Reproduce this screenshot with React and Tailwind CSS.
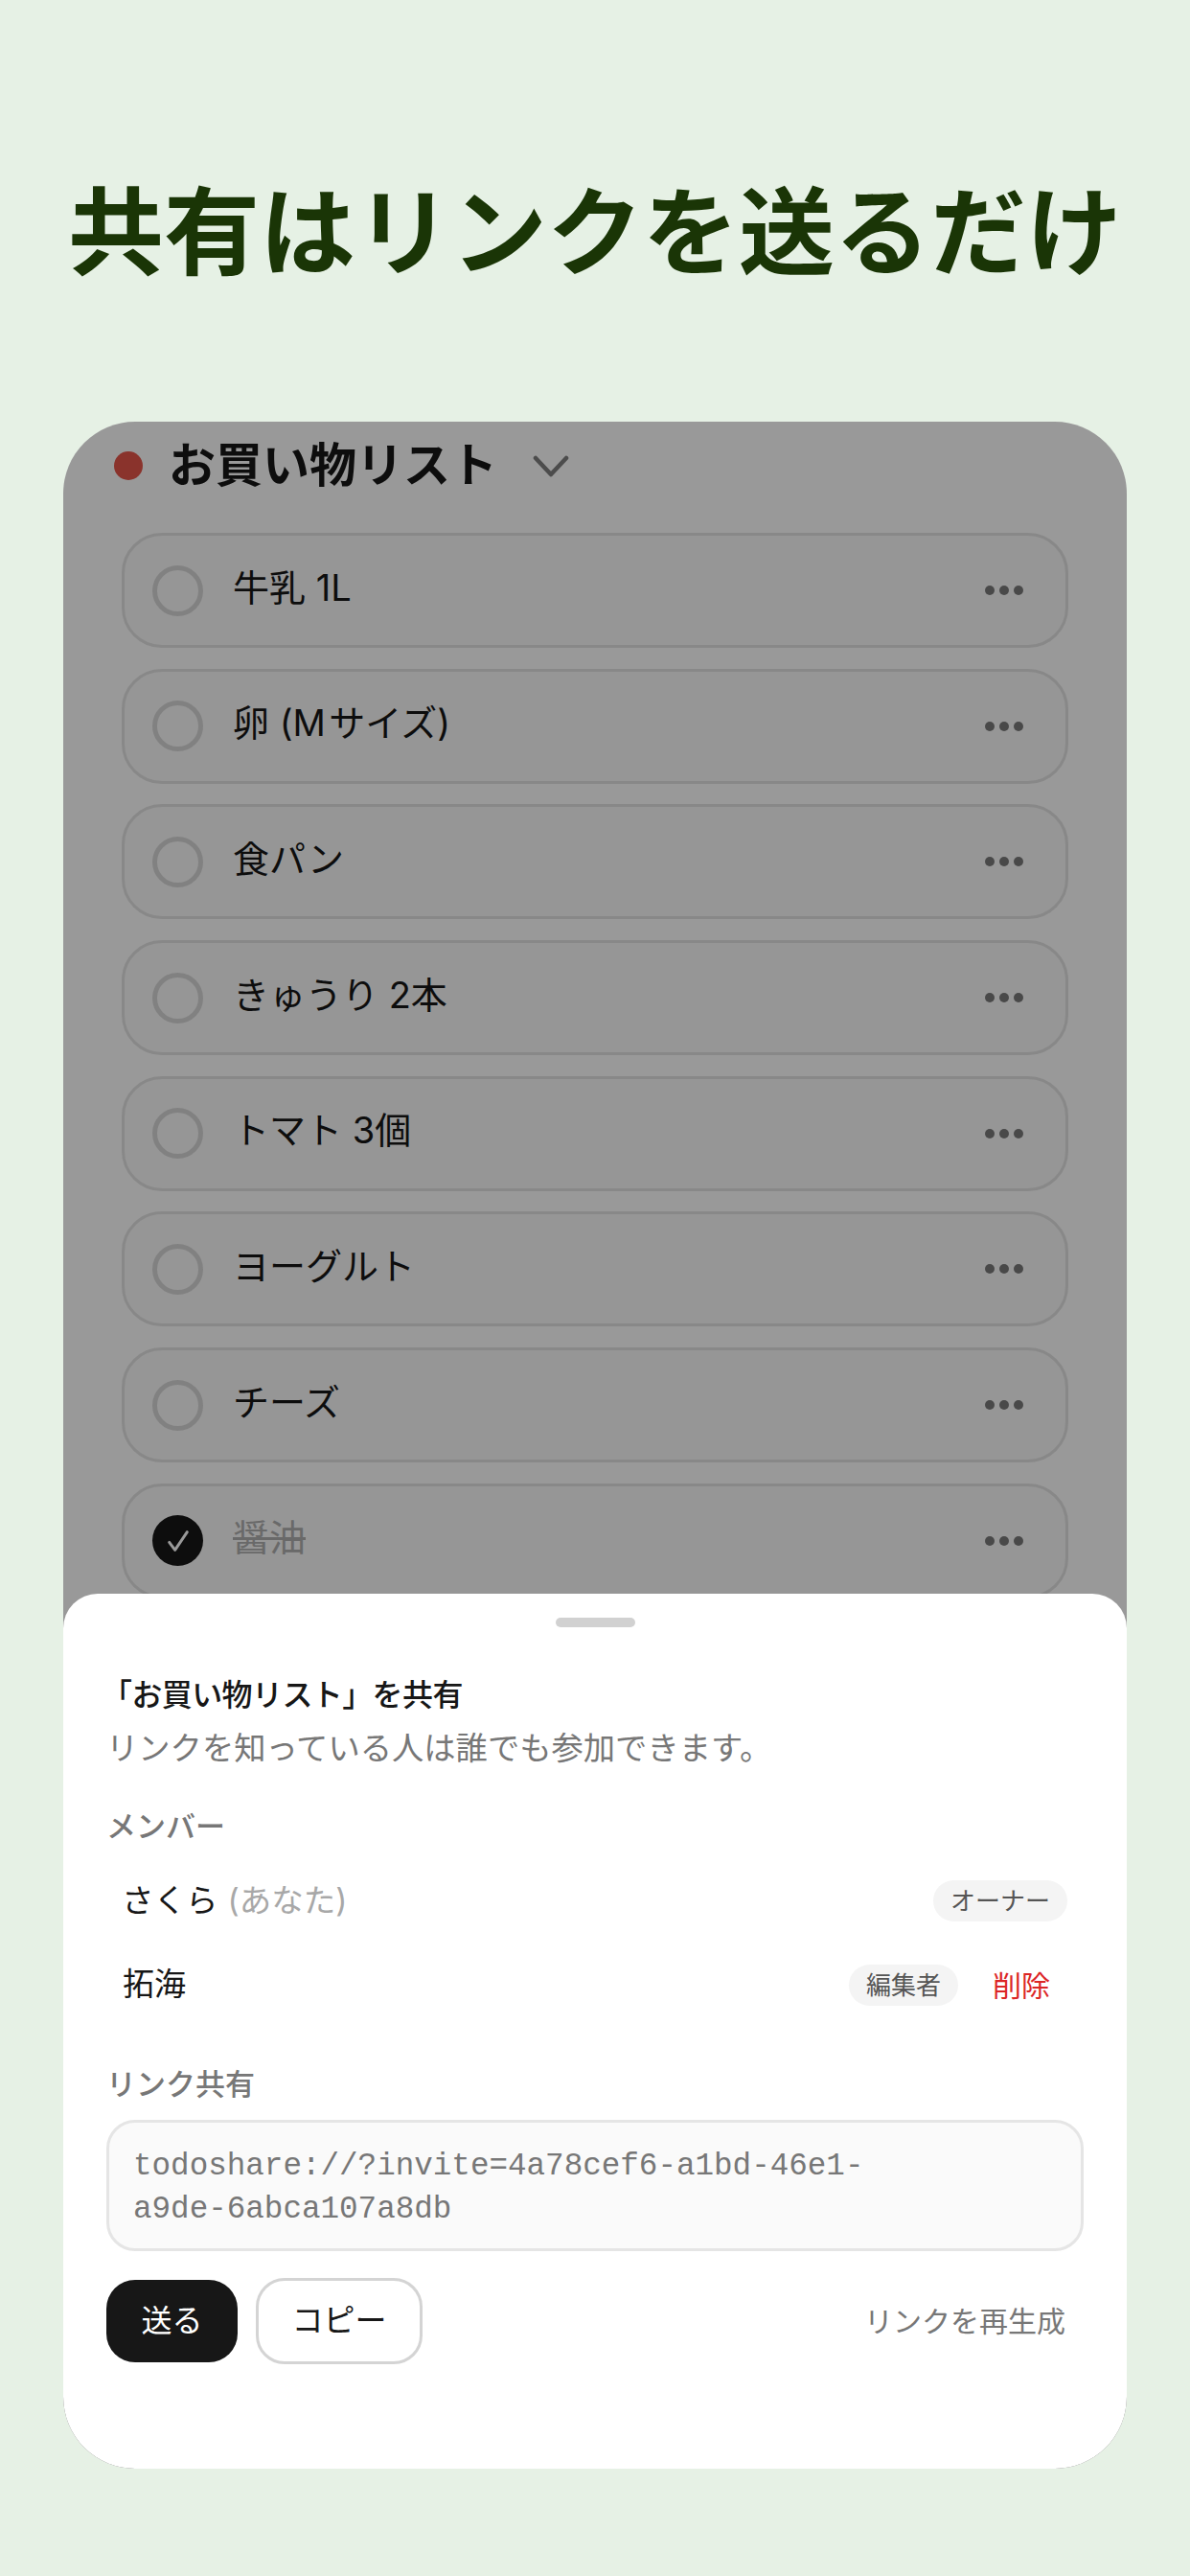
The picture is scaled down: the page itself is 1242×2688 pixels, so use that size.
import React from 'react';

const FONT = "font-['Inter','Noto_Sans_CJK_JP',sans-serif]";

const ITEMS = [
  { label: '牛乳 1L' },
  { label: '卵 (M\u200aサイズ)' },
  { label: '食パン' },
  { label: 'きゅうり 2本' },
  { label: 'トマト 3個' },
  { label: 'ヨーグルト' },
  { label: 'チーズ' },
  { label: '醤油', done: true },
];

const Row = ({ label, done }) => (
  <div className="flex items-center h-[120px] pl-[29px] pr-[44px] bg-[#fafafa] border-[3px] border-[#e3e3e3] rounded-[42px]">
    {done ? (
      <div className="flex items-center justify-center w-[53px] h-[53px] rounded-full bg-[#171717]">
        <svg width="32" height="32" viewBox="0 0 24 24" fill="none" stroke="#fff" strokeWidth="2.2" strokeLinecap="round" strokeLinejoin="round">
          <path d="M5 13l4.5 6L19 5" />
        </svg>
      </div>
    ) : (
      <div className="w-[53px] h-[53px] rounded-full border-[5px] border-[#d8d8d8]" />
    )}
    <span className={`ml-[31px] text-[38px] leading-[52px] -mt-[7px] ${done ? 'text-[#b0b0b0] line-through decoration-[3px]' : 'text-[#171717]'}`}>
      {label}
    </span>
    <div className="flex gap-[5px] ml-auto">
      <span className="w-[10px] h-[10px] rounded-full bg-[#7a7a7a]" />
      <span className="w-[10px] h-[10px] rounded-full bg-[#7a7a7a]" />
      <span className="w-[10px] h-[10px] rounded-full bg-[#7a7a7a]" />
    </div>
  </div>
);

const Pill = ({ children }) => (
  <span className="flex items-center h-[43px] px-[18px] rounded-full bg-[#f4f4f4] text-[26px] text-[#555]">
    {children}
  </span>
);

const App = () => {
  return (
    <div className={`w-[1242px] h-[2688px] bg-[#e6f1e5] pt-[173px] ${FONT}`}>
      <h1 className="text-center text-[100px] leading-[140px] font-bold text-[#1a3506]">
        共有はリンクを送るだけ
      </h1>

      <div className="relative mx-[66px] mt-[127px] w-[1110px] h-[2136px] bg-white rounded-[75px] overflow-hidden">
        <div className="flex items-center h-[92px] pl-[53px]">
          <span className="w-[30px] h-[30px] rounded-full bg-[#e6554a]" />
          <span className="ml-[27px] text-[49px] leading-[64px] font-bold text-[#171717]">お買い物リスト</span>
          <svg className="ml-[37px]" width="38" height="24" viewBox="0 0 38 24" fill="none" stroke="#7f7f7f" strokeWidth="4.5" strokeLinecap="round" strokeLinejoin="round">
            <path d="M3 4l16 17L35 4" />
          </svg>
        </div>

        <div className="flex flex-col gap-[21.7px] mt-[24px] mx-[61px]">
          {ITEMS.map(item => (
            <Row key={item.label} {...item} />
          ))}
        </div>

        {/* dim layer behind the sheet */}
        <div className="absolute inset-0 bg-black/40" />

        <div className="absolute inset-x-0 bottom-0 h-[913px] bg-white rounded-t-[36px] rounded-b-[75px] px-[45px]">
          <div className="w-[83px] h-[10px] mx-auto mt-[25px] rounded-full bg-[#d1d1d1]" />

          <p className="mt-[49px] -ml-[5px] text-[32px] leading-[44px] font-medium text-[#171717] -tracking-[0.6px]">
            「お買い物リスト」を共有
          </p>
          <p className="mt-[11px] text-[33.3px] leading-[44px] text-[#777]">
            リンクを知っている人は誰でも参加できます。
          </p>

          <p className="mt-[40px] text-[31px] leading-[40px] font-medium text-[#777]">メンバー</p>

          <div className="flex items-center h-[88px] pl-[16px] pr-[17px] mt-[13px]">
            <span className="text-[33.5px] text-[#171717]">さくら</span>
            <span className="ml-[10px] text-[33.5px] text-[#a8a8a8]">(あなた)</span>
            <div className="ml-auto"><Pill>オーナー</Pill></div>
          </div>

          <div className="flex items-center h-[88px] pl-[17px] pr-[35px]">
            <span className="text-[33px] text-[#171717]">拓海</span>
            <div className="ml-auto"><Pill>編集者</Pill></div>
            <span className="ml-[36px] mt-[3px] text-[30px] text-[#dc2626]">削除</span>
          </div>

          <p className="mt-[40px] text-[31px] leading-[40px] font-medium text-[#777]">リンク共有</p>

          <div className="mt-[17px] h-[137px] pl-[25px] pt-[23px] w-[1020px] bg-[#fafafa] border-[3px] border-[#e5e5e5] rounded-[30px] font-['Liberation_Mono',monospace] text-[32.6px] leading-[45px] text-[#777]">
            <div>todoshare://?invite=4a78cef6-a1bd-46e1-</div>
            <div>a9de-6abca107a8db</div>
          </div>

          <div className="flex items-center mt-[28px]">
            <button className="h-[86px] w-[137px] rounded-[30px] bg-[#171717] text-white text-[32px]">送る</button>
            <button className="ml-[19px] h-[90px] w-[174px] rounded-[30px] bg-white border-[3px] border-[#d4d4d4] text-[#171717] text-[33px]">コピー</button>
            <span className="ml-auto mr-[19px] text-[30px] text-[#777]">リンクを再生成</span>
          </div>
        </div>
      </div>
    </div>
  );
};

export default App;
